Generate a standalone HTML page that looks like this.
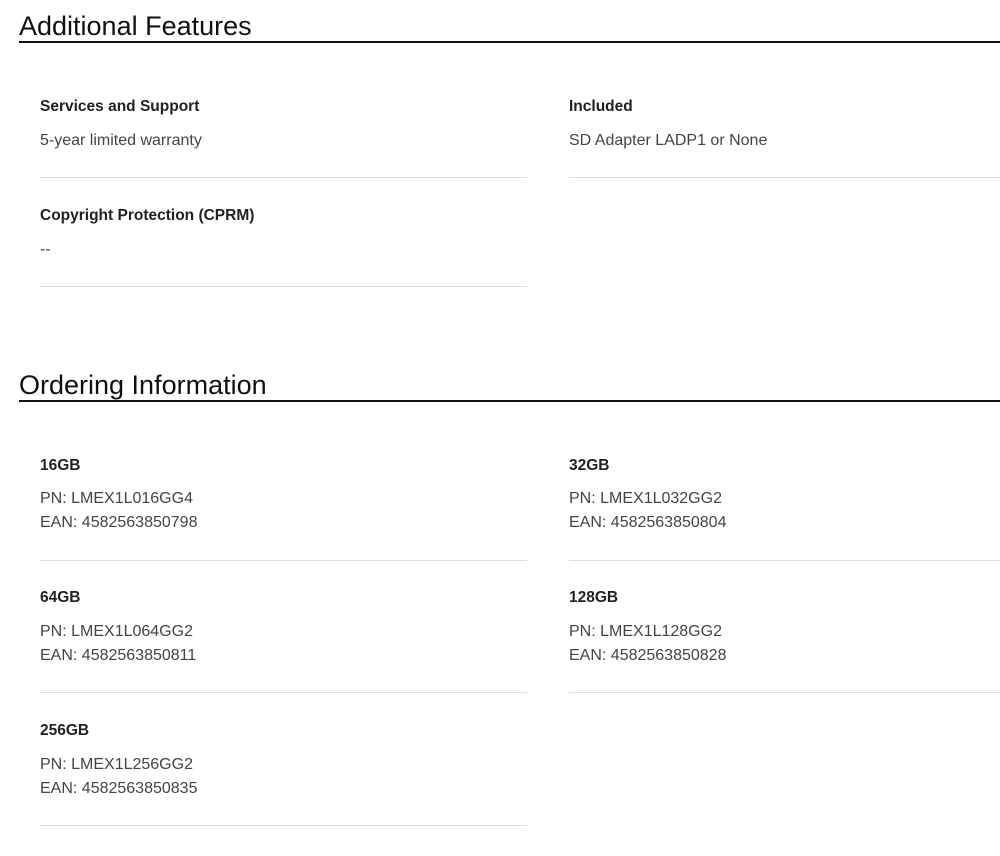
<!DOCTYPE html>
<html><head><style>
body{margin:0;width:1000px;height:856px;background:#fff;font-family:"Liberation Sans",sans-serif;position:relative;overflow:hidden}
.h{position:absolute;left:19px;font-size:27px;color:#111;line-height:30px;letter-spacing:0px}
.ln{position:absolute;left:19px;right:0;height:2px;background:#111}
.l{position:absolute;font-size:15.5px;font-weight:bold;color:#222;line-height:20px;letter-spacing:0px}
.v{position:absolute;font-size:16px;color:#444;line-height:24px;letter-spacing:0px}
.d{position:absolute;height:1px;background:#ddd}
</style></head><body>
<div class="h" style="top:11px">Additional Features</div>
<div class="ln" style="top:41px"></div>

<div class="l" style="left:40px;top:97px">Services and Support</div>
<div class="v" style="left:40px;top:129px">5-year limited warranty</div>
<div class="d" style="left:40px;width:487px;top:177px"></div>
<div class="l" style="left:569px;top:97px">Included</div>
<div class="v" style="left:569px;top:129px">SD Adapter LADP1 or None</div>
<div class="d" style="left:569px;width:431px;top:177px"></div>
<div class="l" style="left:40px;top:206px">Copyright Protection (CPRM)</div>
<div class="v" style="left:40px;top:238px">--</div>
<div class="d" style="left:40px;width:487px;top:286px"></div>

<div class="h" style="top:370px">Ordering Information</div>
<div class="ln" style="top:400px"></div>

<div class="l" style="left:40px;top:456px">16GB</div>
<div class="v" style="left:40px;top:487px">PN: LMEX1L016GG4<br>EAN: 4582563850798</div>
<div class="d" style="left:40px;width:487px;top:560px"></div>
<div class="l" style="left:569px;top:456px">32GB</div>
<div class="v" style="left:569px;top:487px">PN: LMEX1L032GG2<br>EAN: 4582563850804</div>
<div class="d" style="left:569px;width:431px;top:560px"></div>

<div class="l" style="left:40px;top:588px">64GB</div>
<div class="v" style="left:40px;top:620px">PN: LMEX1L064GG2<br>EAN: 4582563850811</div>
<div class="d" style="left:40px;width:487px;top:692px"></div>
<div class="l" style="left:569px;top:588px">128GB</div>
<div class="v" style="left:569px;top:620px">PN: LMEX1L128GG2<br>EAN: 4582563850828</div>
<div class="d" style="left:569px;width:431px;top:692px"></div>

<div class="l" style="left:40px;top:721px">256GB</div>
<div class="v" style="left:40px;top:753px">PN: LMEX1L256GG2<br>EAN: 4582563850835</div>
<div class="d" style="left:40px;width:487px;top:825px"></div>
</body></html>
